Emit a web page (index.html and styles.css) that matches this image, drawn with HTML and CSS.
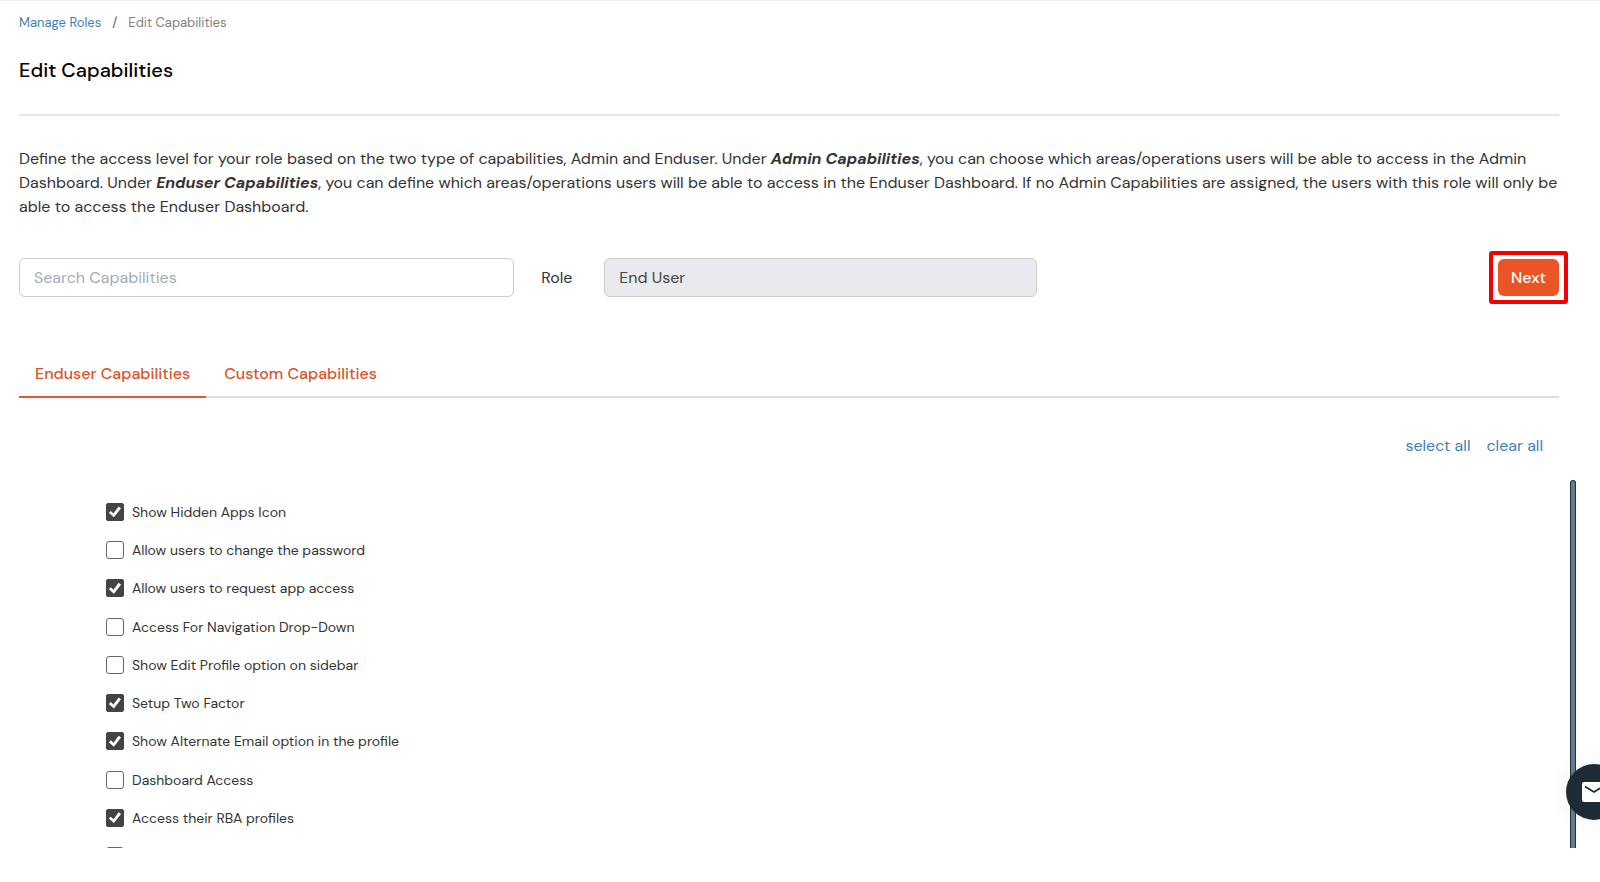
FILE: index.html
```html
<!DOCTYPE html>
<html lang="en">
<head>
    <meta charset="UTF-8">
    <meta name="viewport" content="width=device-width, initial-scale=1.0">
    <title>Edit Capabilities</title>
    <link rel="stylesheet" href="styles.css">
</head>
<body>
    <main class="page">
        <nav class="breadcrumb" aria-label="Breadcrumb">
            <a href="#">Manage Roles</a>
            <span class="separator">/</span>
            <span class="current">Edit Capabilities</span>
        </nav>

        <h1>Edit Capabilities</h1>

        <p class="description">Define the access level for your role based on the two type of capabilities, Admin and Enduser. Under <em>Admin Capabilities</em>, you can choose which areas/operations users will be able to access in the Admin Dashboard. Under <em>Enduser Capabilities</em>, you can define which areas/operations users will be able to access in the Enduser Dashboard. If no Admin Capabilities are assigned, the users with this role will only be able to access the Enduser Dashboard.</p>

        <form class="toolbar" id="roleForm">
            <input type="text" class="search" placeholder="Search Capabilities" aria-label="Search Capabilities">
            <label for="role">Role</label>
            <input type="text" class="role" id="role" value="End User" readonly>
            <div class="highlight">
                <button type="button">Next</button>
            </div>
        </form>

        <div class="tabs">
            <a href="#" class="tab active">Enduser Capabilities</a>
            <a href="#" class="tab">Custom Capabilities</a>
        </div>

        <div class="bulk">
            <a href="#">select all</a>
            <a href="#">clear all</a>
        </div>

        <div class="scroll-area">
            <div class="capabilities">
                <label><input type="checkbox" checked>Show Hidden Apps Icon</label>
                <label><input type="checkbox">Allow users to change the password</label>
                <label><input type="checkbox" checked>Allow users to request app access</label>
                <label><input type="checkbox">Access For Navigation Drop-Down</label>
                <label><input type="checkbox">Show Edit Profile option on sidebar</label>
                <label><input type="checkbox" checked>Setup Two Factor</label>
                <label><input type="checkbox" checked>Show Alternate Email option in the profile</label>
                <label><input type="checkbox">Dashboard Access</label>
                <label><input type="checkbox" checked>Access their RBA profiles</label>
                <label><input type="checkbox" aria-label="More capabilities"></label>
            </div>
            <div class="scrollbar"></div>
        </div>
    </main>

    <button type="button" class="chat" aria-label="Contact us">
        <svg width="24" height="20" viewBox="0 0 24 20">
            <rect width="24" height="20" rx="2" fill="#fff"/>
            <path d="M3 4.5 L12 10 L21 4.5" fill="none" stroke="#1c2b36" stroke-width="1.6"/>
        </svg>
    </button>
</body>
</html>
```
FILE: styles.css
```css
* {
    box-sizing: border-box;
}

body {
    font-family: "DM Sans", Inter, "Open Sans", sans-serif;
    font-size: 16px;
    color: #333;
    background-color: #fff;
    margin: 0;
    overflow: hidden;
}

a {
    color: #427fb3;
    text-decoration: none;
}

.page {
    display: flex;
    flex-direction: column;
    height: 100vh;
    padding: 12px 24px 34px 19px;
    border-top: 1px solid #f0f0f0;
}

.page > * {
    margin-right: 17px;
}

.breadcrumb {
    display: flex;
    gap: 11px;
    font-size: 13px;
    line-height: 20px;
}

.separator {
    color: #555;
}

.current {
    color: #808080;
}

h1 {
    margin: 22px 0 0;
    padding-bottom: 29px;
    border-bottom: 2px solid #e7e7e7;
    font-size: 20px;
    font-weight: 500;
    line-height: 30px;
    color: #000;
}

.description {
    margin-top: 31px;
    margin-bottom: 0;
    font-size: 16px;
    line-height: 24px;
}

.description em {
    font-weight: 700;
}

.toolbar {
    display: flex;
    align-items: center;
    margin-top: 32px;
}

.toolbar input {
    height: 39px;
    padding: 0 14px;
    border: 1px solid #ccc;
    border-radius: 6px;
    font: inherit;
    color: #444;
    outline: none;
}

.toolbar input::placeholder {
    color: #a3abb5;
}

.toolbar .search {
    width: calc(33% - 13px);
}

.toolbar label {
    width: 90px;
    padding-left: 27px;
}

.toolbar .role {
    width: calc(29% - 14px);
    background-color: #e9eaed;
}

/* frame round the Next button */
.highlight {
    margin-left: auto;
    margin-right: -9px;
    padding: 4px 5px;
    border: 4px solid #f50000;
    border-radius: 3px;
}

.highlight button {
    display: block;
    width: 61px;
    height: 37px;
    padding: 0;
    border: none;
    border-radius: 6px;
    background-color: #eb5424;
    color: #fff;
    font: inherit;
    font-weight: 500;
    cursor: pointer;
}

.tabs {
    display: flex;
    gap: 2px;
    margin-top: 48px;
    border-bottom: 2px solid #ddd;
}

.tab {
    margin-bottom: -2px;
    padding: 10px 16px;
    border-bottom: 2px solid transparent;
    font-weight: 500;
    line-height: 24px;
    color: #d9552c;
}

.tab.active {
    border-bottom-color: #e2592f;
}

.bulk {
    display: flex;
    justify-content: flex-end;
    gap: 16px;
    margin-top: 36px;
    padding-right: 16px;
    line-height: 24px;
}

.page .scroll-area {
    display: flex;
    flex: 1;
    min-height: 0;
    margin-top: 22px;
    margin-right: 0;
    overflow: hidden;
}

.capabilities {
    display: flex;
    flex: 1;
    flex-direction: column;
    justify-content: space-between;
    height: 388px;
    padding: 20px 0 0 87px;
}

.capabilities label {
    display: flex;
    flex: none;
    align-items: center;
    gap: 8px;
    height: 24px;
    font-size: 14px;
}

.capabilities input {
    appearance: none;
    display: grid;
    place-items: center;
    width: 18px;
    height: 18px;
    margin: 0;
    border: 1px solid #666;
    border-radius: 3px;
    background-color: #fff;
}

.capabilities input:checked {
    border-color: #444;
    border-radius: 2px;
    background-color: #444;
}

.capabilities input:checked::before {
    content: "";
    width: 14px;
    height: 14px;
    background-color: #fff;
    clip-path: polygon(6% 56%, 20% 42%, 39% 60%, 76% 10%, 93% 23%, 42% 88%);
}

.scrollbar {
    width: 6px;
    border: 1px solid #1f333f;
    border-bottom: none;
    border-radius: 3px 3px 0 0;
    background-color: #667d8b;
}

/* sits partly past the right edge of the window */
.chat {
    position: fixed;
    right: -22px;
    bottom: 62px;
    display: flex;
    align-items: center;
    justify-content: center;
    width: 56px;
    height: 56px;
    padding: 0;
    border: none;
    border-radius: 50%;
    background-color: #1c2b36;
    box-shadow: 0 0 24px rgba(0, 0, 0, 0.06);
    cursor: pointer;
}
```
